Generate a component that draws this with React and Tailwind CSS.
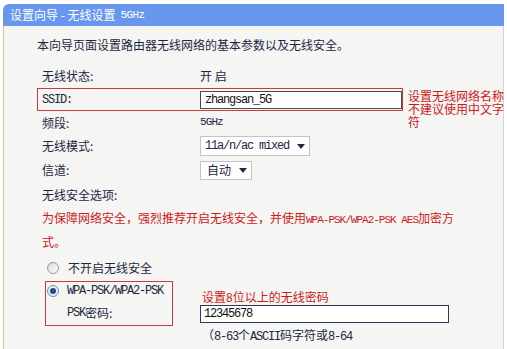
import React from 'react';

const Arrow = () => (
  <svg width="8" height="5" viewBox="0 0 8 5" className="shrink-0">
    <path d="M0 0 H8 L4 5 Z" fill="#1f2b46" />
  </svg>
);

const App = () => {
  return (
    <div className="w-[507px] h-[349px] overflow-hidden bg-white font-['Noto_Sans_CJK_SC',sans-serif] text-[12px] text-[#1c2842]">
      <div className="ml-[3px] mt-[4px] w-[501px]">
        {/* Title bar */}
        <div className="h-[22px] rounded-tl-[6px] bg-[#6897ee] text-white flex items-center pl-[7px] leading-none">
          <span>设置向导 - 无线设置</span>
          <span className="ml-[5px] font-['Liberation_Mono',monospace] text-[11px] tracking-[-0.6px]">5GHz</span>
        </div>

        {/* Body */}
        <div className="h-[330px] border-l border-[#e3bf8c] border-r border-r-[#d6d6d6] bg-[#f5f5f3] pl-[33px] pt-[11px]">
          <p className="h-[16px] leading-[16px]">本向导页面设置路由器无线网络的基本参数以及无线安全。</p>

          <div className="mt-[11px]">
            <div className="flex items-center h-[23px]">
              <span className="w-[163px] pl-[5px]">无线状态:</span>
              <span>开 启</span>
            </div>

            <div className="flex h-[23px] mt-[1px]">
              <div className="flex items-center w-[367px] h-[23px] border border-[#c43c3c]">
                <span className="w-[162px] pl-[4px] font-['Liberation_Mono',monospace] text-[12px] tracking-[-1.2px]">SSID:</span>
                <div className="w-[202px] h-[18px] bg-white border border-[#4a4a4a] flex items-center pl-[4px] font-['Liberation_Mono',monospace] text-[12px] tracking-[-1.2px] text-[#111]">
                  zhangsan_5G
                </div>
              </div>
              <div className="ml-[5px] w-[96px] text-[#cc1a1a] leading-[13px] pt-[1px] shrink-0">
                设置无线网络名称不建议使用中文字符
              </div>
            </div>

            <div className="flex items-center h-[23px]">
              <span className="w-[163px] pl-[5px]">频段:</span>
              <span className="font-['Liberation_Mono',monospace] text-[11px] tracking-[-0.9px]">5GHz</span>
            </div>

            <div className="flex items-center h-[24px]">
              <span className="w-[163px] pl-[5px]">无线模式:</span>
              <div className="w-[110px] h-[20px] bg-white border border-[#c4c4c4] flex items-center justify-between pl-[4px] pr-[4px]">
                <span className="font-['Liberation_Mono',monospace] text-[12px] tracking-[-1.2px]">11a/n/ac mixed</span>
                <Arrow />
              </div>
            </div>

            <div className="flex items-center h-[24px]">
              <span className="w-[163px] pl-[5px]">信道:</span>
              <div className="w-[52px] h-[19px] bg-white border border-[#c4c4c4] flex items-center justify-between pl-[6px] pr-[4px]">
                <span>自动</span>
                <Arrow />
              </div>
            </div>

            <div className="flex items-center h-[25px]">
              <span className="pl-[5px]">无线安全选项:</span>
            </div>

            <p className="pl-[5px] leading-[21px] text-[#cc1a1a]">
              为保障网络安全，强烈推荐开启无线安全，并使用<span className="font-['Liberation_Mono',monospace] text-[11px] tracking-[-1px]">WPA-PSK/WPA2-PSK AES</span>加密方
              <br />
              式。
            </p>

            <div className="flex items-center h-[24px] mt-[4px] pl-[10px]">
              <span className="w-[12px] h-[12px] rounded-full border border-[#9a9a9a] bg-gradient-to-br from-[#d8d8d8] to-white shrink-0"></span>
              <span className="ml-[9px]">不开启无线安全</span>
            </div>

            <div className="flex mt-[1px]">
              <div className="ml-[8px] w-[128px] h-[45px] border border-[#c43c3c] flex flex-col shrink-0">
                <div className="flex items-center h-[18px] pl-[1px]">
                  <span className="w-[12px] h-[12px] rounded-full border border-[#7a8aa0] bg-[#e8eef6] flex items-center justify-center shrink-0">
                    <span className="w-[6px] h-[6px] rounded-full bg-[#1f4f8f]"></span>
                  </span>
                  <span className="ml-[8px] font-['Liberation_Mono',monospace] text-[12px] tracking-[-1.2px]">WPA-PSK/WPA2-PSK</span>
                </div>
                <div className="flex items-center h-[22px] mt-[2px] pl-[21px]">
                  <span className="font-['Liberation_Mono',monospace] text-[12px] tracking-[-1.2px]">PSK</span>
                  <span>密码:</span>
                </div>
              </div>

              <div className="ml-[27px] pt-[8px]">
                <p className="pl-[2px] h-[16px] leading-[16px] text-[#cc1a1a]">设置8位以上的无线密码</p>
                <div className="w-[249px] h-[18px] bg-white border border-[#2b3a55] flex items-center pl-[3px] font-['Liberation_Mono',monospace] text-[12px] tracking-[-1.2px] text-[#111]">
                  12345678
                </div>
                <p className="pl-[2px] mt-[1px] leading-[21px]">
                  （<span className="font-['Liberation_Mono',monospace] text-[12px] tracking-[-1.2px]">8-63</span>个<span className="font-['Liberation_Mono',monospace] text-[12px] tracking-[-1.2px]">ASCII</span>码字符或<span className="font-['Liberation_Mono',monospace] text-[12px] tracking-[-1.2px]">8-64</span>
                  <br />
                  个十六进制字符）
                </p>
              </div>
            </div>
          </div>
        </div>
      </div>
    </div>
  );
};

export default App;
